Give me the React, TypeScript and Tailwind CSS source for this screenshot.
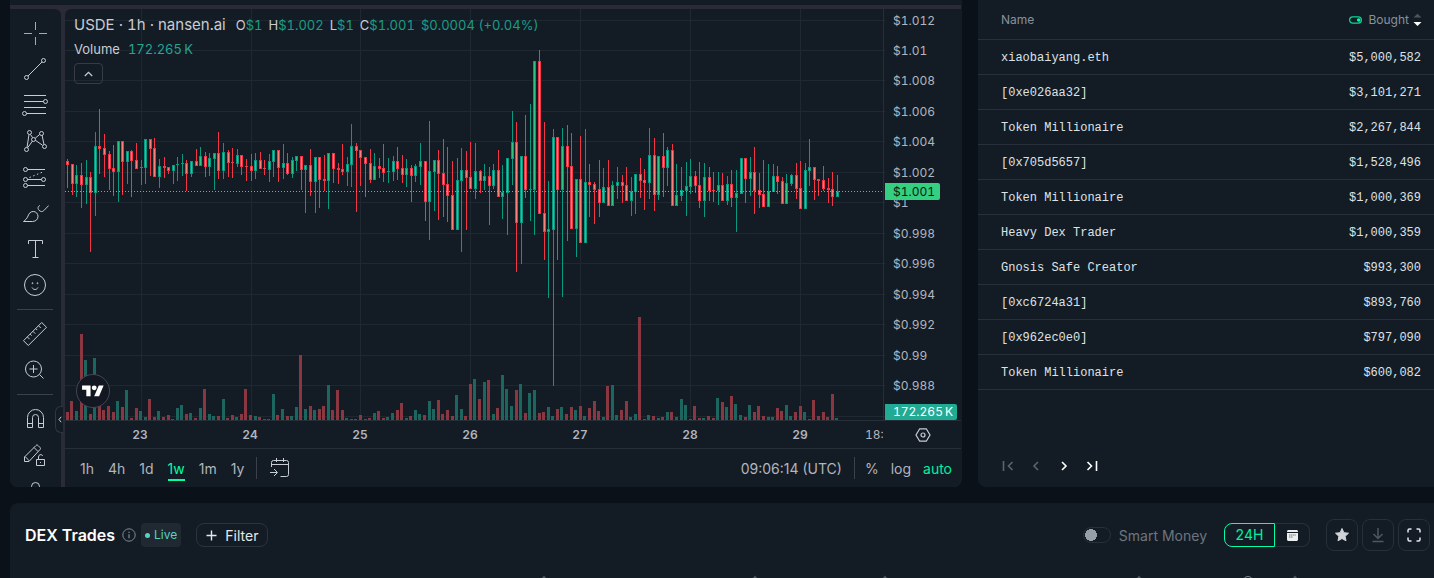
import React from "react";

type Candle = ["r" | "g", number, number, number, number, number];

// [direction, high, body top, body bottom, low, volume height]
const CANDLES: Candle[] = [
  ["r", 159, 161, 165, 188, 8], ["r", 164, 164, 184, 195, 19], ["g", 165, 175, 184, 197, 9], ["r", 163, 175, 185, 208, 86],
  ["g", 160, 177, 185, 204, 60], ["r", 172, 177, 193, 252, 6], ["g", 132, 146, 193, 216, 62], ["r", 109, 146, 149, 174, 14],
  ["r", 134, 148, 155, 177, 10], ["r", 151, 154, 169, 190, 14], ["r", 145, 168, 172, 196, 8], ["g", 141, 141, 172, 202, 19],
  ["r", 141, 141, 162, 195, 13], ["g", 151, 151, 162, 184, 30], ["r", 150, 151, 161, 197, 2], ["r", 143, 160, 169, 169, 12],
  ["g", 160, 167, 168, 185, 9], ["g", 139, 139, 168, 184, 3], ["r", 139, 139, 149, 176, 21], ["r", 138, 148, 177, 177, 3],
  ["g", 159, 166, 177, 188, 9], ["r", 157, 166, 168, 178, 3], ["r", 167, 167, 171, 174, 5], ["g", 165, 165, 171, 184, 1],
  ["g", 157, 164, 165, 181, 12], ["g", 154, 163, 164, 176, 15], ["r", 160, 163, 174, 191, 6], ["g", 161, 161, 174, 177, 7],
  ["r", 149, 161, 166, 166, 2], ["g", 147, 156, 166, 166, 12], ["r", 152, 156, 167, 177, 31], ["g", 153, 158, 167, 176, 6],
  ["g", 153, 153, 159, 190, 4], ["r", 132, 153, 171, 179, 4], ["g", 143, 152, 171, 179, 21], ["r", 150, 152, 163, 177, 2],
  ["r", 148, 162, 163, 178, 5], ["g", 149, 155, 164, 167, 3], ["r", 155, 155, 167, 175, 6], ["r", 159, 166, 167, 181, 31],
  ["r", 154, 166, 171, 181, 5], ["g", 153, 160, 171, 179, 4], ["r", 152, 160, 169, 169, 3], ["r", 160, 168, 169, 175, 1],
  ["g", 154, 161, 170, 182, 1], ["g", 150, 150, 162, 177, 26], ["r", 150, 150, 168, 182, 5], ["g", 144, 163, 168, 179, 11],
  ["r", 153, 163, 174, 175, 4], ["g", 157, 160, 174, 178, 4], ["g", 156, 156, 161, 171, 13], ["r", 156, 156, 170, 190, 65],
  ["g", 165, 165, 170, 213, 11], ["r", 149, 165, 182, 196, 14], ["g", 157, 157, 182, 213, 10], ["r", 157, 157, 180, 208, 11],
  ["r", 155, 179, 181, 191, 14], ["g", 153, 153, 181, 209, 35], ["r", 153, 153, 169, 183, 10], ["r", 163, 168, 170, 184, 30],
  ["r", 144, 169, 172, 175, 10], ["g", 157, 164, 172, 186, 2], ["g", 124, 146, 165, 187, 1], ["r", 143, 146, 151, 212, 1],
  ["r", 150, 150, 158, 186, 5], ["r", 157, 157, 164, 197, 1], ["r", 149, 163, 180, 183, 2], ["g", 153, 166, 180, 180, 7],
  ["r", 158, 166, 169, 178, 9], ["r", 144, 168, 173, 182, 2], ["g", 158, 171, 172, 183, 3], ["g", 156, 161, 172, 181, 7],
  ["r", 147, 161, 169, 180, 10], ["r", 155, 168, 175, 183, 17], ["g", 159, 168, 175, 187, 2], ["r", 165, 168, 176, 202, 4],
  ["g", 164, 166, 176, 182, 10], ["g", 143, 161, 167, 185, 6], ["r", 161, 161, 202, 221, 5], ["g", 121, 171, 202, 240, 19],
  ["g", 160, 160, 172, 211, 11], ["r", 150, 160, 174, 220, 20], ["r", 139, 173, 185, 217, 6], ["r", 147, 184, 196, 222, 10],
  ["r", 161, 195, 230, 230, 4], ["g", 158, 180, 230, 230, 25], ["g", 148, 170, 181, 252, 11], ["r", 151, 170, 178, 230, 4],
  ["r", 142, 177, 189, 189, 36], ["g", 143, 171, 189, 199, 41], ["r", 170, 171, 181, 193, 21], ["g", 164, 176, 181, 190, 38],
  ["r", 167, 176, 186, 225, 40], ["g", 164, 170, 186, 189, 6], ["r", 150, 170, 197, 197, 12], ["g", 165, 192, 197, 219, 45],
  ["g", 158, 158, 193, 235, 31], ["g", 111, 142, 159, 185, 14], ["r", 122, 142, 223, 272, 30], ["g", 156, 156, 223, 264, 36],
  ["r", 115, 156, 190, 198, 7], ["g", 104, 189, 190, 221, 27], ["g", 61, 61, 190, 235, 30], ["r", 50, 61, 214, 214, 7],
  ["r", 122, 213, 232, 260, 8], ["g", 181, 229, 232, 298, 13], ["g", 129, 137, 230, 386, 4], ["r", 137, 137, 190, 260, 11],
  ["g", 128, 146, 190, 297, 13], ["r", 125, 146, 167, 241, 6], ["r", 133, 166, 229, 229, 13], ["g", 179, 179, 229, 257, 10],
  ["r", 136, 179, 243, 243, 14], ["g", 129, 182, 243, 243, 4], ["r", 164, 182, 185, 217, 12], ["r", 182, 184, 190, 224, 19],
  ["r", 160, 189, 203, 217, 9], ["g", 168, 187, 203, 203, 3], ["r", 160, 187, 206, 206, 34], ["g", 181, 185, 206, 206, 35],
  ["g", 167, 182, 186, 199, 5], ["r", 175, 182, 186, 203, 10], ["r", 167, 185, 201, 201, 19], ["g", 177, 191, 201, 216, 3],
  ["g", 174, 174, 192, 214, 6], ["r", 158, 174, 181, 198, 103], ["r", 169, 180, 183, 210, 1], ["g", 128, 155, 183, 199, 5],
  ["r", 138, 155, 195, 211, 4], ["g", 156, 156, 195, 200, 2], ["r", 133, 156, 168, 197, 3], ["g", 147, 150, 168, 186, 8],
  ["r", 144, 150, 206, 206, 8], ["g", 164, 195, 206, 206, 3], ["g", 167, 190, 196, 201, 21], ["g", 162, 186, 191, 216, 15],
  ["g", 159, 176, 187, 194, 1], ["r", 171, 176, 186, 193, 14], ["r", 162, 185, 201, 208, 2], ["g", 163, 177, 201, 217, 2],
  ["r", 167, 177, 191, 201, 4], ["r", 172, 190, 191, 202, 2], ["g", 172, 185, 191, 205, 22], ["r", 173, 185, 201, 201, 18],
  ["g", 176, 184, 201, 205, 13], ["r", 170, 184, 198, 207, 24], ["g", 170, 193, 198, 232, 16], ["g", 158, 158, 194, 194, 5],
  ["r", 158, 158, 179, 203, 3], ["g", 157, 172, 179, 196, 15], ["r", 147, 172, 191, 214, 8], ["r", 173, 190, 195, 208, 14],
  ["r", 160, 194, 207, 207, 4], ["g", 164, 191, 207, 207, 3], ["g", 164, 176, 192, 192, 3], ["r", 166, 176, 182, 194, 12],
  ["r", 177, 181, 204, 204, 9], ["g", 174, 183, 204, 204, 15], ["g", 174, 175, 184, 186, 4], ["r", 163, 175, 189, 199, 8],
  ["r", 161, 188, 209, 209, 14], ["g", 163, 170, 209, 209, 8], ["g", 139, 167, 171, 186, 1], ["r", 167, 167, 180, 200, 20],
  ["r", 179, 179, 181, 196, 4], ["r", 166, 180, 189, 191, 8], ["r", 178, 188, 190, 203, 3], ["r", 172, 189, 197, 206, 26],
  ["g", 175, 191, 197, 197, 2],
];

const GRID_Y = [20, 50, 80, 111, 141, 172, 202, 233, 263, 294, 324, 355, 385, 416];
const PRICES = ["$1.012", "$1.01", "$1.008", "$1.006", "$1.004", "$1.002", "$1", "$0.998", "$0.996", "$0.994", "$0.992", "$0.99", "$0.988"];
const DAYS = ["23", "24", "25", "26", "27", "28", "29"];
const VOLUME = "172.265\u2009K";
const candleX = (i: number) => Math.floor(67.82 + i * 4.58);
const volumeX = (i: number) => Math.floor(67.3 + i * 4.58);

const ROWS: [string, string][] = [
  ["xiaobaiyang.eth", "$5,000,582"],
  ["[0xe026aa32]", "$3,101,271"],
  ["Token Millionaire", "$2,267,844"],
  ["[0x705d5657]", "$1,528,496"],
  ["Token Millionaire", "$1,000,369"],
  ["Heavy Dex Trader", "$1,000,359"],
  ["Gnosis Safe Creator", "$993,300"],
  ["[0xc6724a31]", "$893,760"],
  ["[0x962ec0e0]", "$797,090"],
  ["Token Millionaire", "$600,082"],
];

function CandleChart() {
  return (
    <svg viewBox="65 9 818 411" preserveAspectRatio="none" className="block h-[411px] w-full" shapeRendering="crispEdges" role="img" aria-label="USDE hourly price chart">
      {GRID_Y.map((y) => <rect key={y} x={65} y={y} width={818} height={1} fill="#1f2831" />)}
      {DAYS.map((d, i) => <rect key={d} x={candleX(16 + 24 * i)} y={9} width={1} height={411} fill="#1f2831" />)}
      {CANDLES.map((c, i) => (
        <rect key={i} x={volumeX(i) - 1} y={420 - c[5]} width={3} height={c[5]} fill={c[0] === "g" ? "#1d665f" : "#8a3741"} />
      ))}
      {CANDLES.map(([dir, high, top, bottom, low], i) => {
        const x = candleX(i);
        const edge = dir === "g" ? "#089981" : "#f23645";
        const body = dir === "g" ? "#2fc480" : "#fb8078";
        return (
          <g key={i}>
            <rect x={x} y={high} width={1} height={low - high} fill={edge} />
            <rect x={x - 1} y={top} width={3} height={bottom - top} fill={edge} />
            {bottom - top > 2 && <rect x={x} y={top + 1} width={1} height={bottom - top - 2} fill={body} />}
          </g>
        );
      })}
      <path d="M65 191.5H883" stroke="#36d287" strokeDasharray="1 2" />
    </svg>
  );
}

const TOOLS: { label: string; active?: boolean; art: React.ReactNode }[][] = [
  [
    { label: "Cross", active: true, art: <path d="M14.5 3v8M14.5 18v8M3 14.5h8M18 14.5h8" /> },
    { label: "Trend line", art: <><path d="M7 21 21 7" /><circle cx="22.5" cy="5.5" r="2" /><circle cx="5.5" cy="22.5" r="2" /></> },
    { label: "Fib retracement", art: <><path d="M3 4.5h22M3 10.5h19.5M3 16.5h22M5.5 22.5H25" /><circle cx="24.5" cy="10.5" r="2" /><circle cx="3.5" cy="22.5" r="2" /></> },
    { label: "Patterns", art: <><path d="M6 20.500 8 7.500M9.500 7.500l2 3M6.700 20.700l4.800-6.700M14.200 11.200l4.500-3.700M14.200 13.200l7.300 5M21 8l2 9.500" /><circle cx="8.500" cy="5.500" r="2" /><circle cx="20.500" cy="6.500" r="2" /><circle cx="12.500" cy="12.500" r="2" /><circle cx="5.500" cy="22.500" r="2" /><circle cx="23.500" cy="19.500" r="2" /></> },
    { label: "Prediction", art: <><path d="M6.500 6.500H24M6.500 16.500h14M6.500 22.500H24" /><path d="M8.500 14.500 23 8.500" strokeDasharray="1.500 2.500" /><circle cx="4.500" cy="6.500" r="2" /><circle cx="4.500" cy="16.500" r="2" /><circle cx="22.500" cy="16.500" r="2" /><circle cx="4.500" cy="22.500" r="2" /></> },
    { label: "Brush", art: <path d="M2.500 22.500h9c3 0 5.500-2 5.500-5.200 0-2.600-2-4.800-4.700-4.800-3 0-4.300 2-5.300 4.500-1 2.600-2.500 4-4.500 5.500zM19 6.500c-2 .5-2.700 3-1 4.700s3.300 1.800 4.700.5l5-5.200" /> },
    { label: "Text", art: <path d="M7.500 9V5.500h14V9M14.500 5.500v17M11.500 22.500h6" /> },
    { label: "Icons", art: <><circle cx="14" cy="14" r="10.500" /><path d="M11 16.500c.8 1.400 1.800 2 3 2s2.200-.6 3-2" /><circle cx="11.500" cy="12.200" r=".5" /><circle cx="16.500" cy="12.200" r=".5" /></> },
  ],
  [
    { label: "Measure", art: <path d="M20.700 2.500 2.500 20.700l4.800 4.800L25.500 7.300zM17.500 5.700l2.300 2.300M14.700 8.500l1.500 1.500M11.900 11.300l2.300 2.300M9.100 14.100l1.500 1.500M6.300 16.900l2.300 2.300" /> },
    { label: "Zoom in", art: <><circle cx="12.500" cy="13" r="8" /><path d="M12.500 9v8M8.500 13h8M18.500 18.500l4 4" /></> },
  ],
  [
    { label: "Magnet", art: <path d="M6.500 22.500V12.500a8 8 0 0 1 16 0v10h-5v-10a3 3 0 0 0-6 0v10zM6.500 18.500h5M17.500 18.500h5" /> },
    { label: "Lock drawing mode", art: <><path d="M3.500 20.500v-4.500L15 4.500c.7-.7 1.300-.7 2 0l2 2c.7.7.7 1.300 0 2L8 20.500zM4 15.500l4.500 4.500M13 6.500l4 4" /><path d="M15.500 18.500h8v6h-8zM17.500 18.500v-2.500c0-3 4-3 4-1M19.500 21v1" /></> },
    { label: "Lock all drawings", art: <path d="M10.500 13V9.500a4 4 0 0 1 8 0V13M7.500 13.500h14v9h-14z" /> },
  ],
];

function Toolbar() {
  return (
    <div className="h-[478px] w-[51px] shrink-0 overflow-hidden rounded-tr-md rounded-bl-lg bg-[#131c25] pt-1.5 pr-px">
      {TOOLS.map((group, g) => (
        <div key={g}>
          {g > 0 && <div className="mx-[7px] my-1.5 h-px bg-[#3b404c]" />}
          {group.map((tool) => (
            <button key={tool.label} aria-label={tool.label} className={`flex h-9 w-full items-center justify-center ${tool.active ? "text-[#00ffa7]" : "text-[#c9ccd4]"}`}>
              <svg width="28" height="28" viewBox="0 0 28 28" fill="none" stroke="currentColor" strokeWidth="1">{tool.art}</svg>
            </button>
          ))}
        </div>
      ))}
    </div>
  );
}

function Legend() {
  const ohlc: [string, string][] = [["O", "$1"], ["H", "$1.002"], ["L", "$1"], ["C", "$1.001"]];
  return (
    <div className="absolute top-1.5 left-[9px] text-[13px]">
      <div className="flex h-5 items-baseline">
        <h2 className="mr-2.5 text-[15px] leading-5 text-[#c9ccd4]">USDE · 1h · nansen.ai</h2>
        <div className="flex gap-1.5 text-[#1a9c87]">
          {ohlc.map(([k, v]) => <span key={k}><span className="text-[#c9ccd4]">{k}</span>{v}</span>)}
          <span>$0.0004 (+0.04%)</span>
        </div>
      </div>
      <div className="mt-[5px] flex h-5 items-center gap-2">
        <span className="text-[#c9ccd4]">Volume</span>
        <span className="text-[#22a592]">{VOLUME}</span>
      </div>
      <button aria-label="Hide indicator legend" className="mt-[3px] flex h-[21px] w-[29px] items-center justify-center rounded border border-[#363b47] text-[#c9ccd4]">
        <svg width="9" height="6" viewBox="0 0 9 6" fill="none" stroke="currentColor" strokeWidth="1.2"><path d="M.8 5 4.500 1.300 8.200 5" /></svg>
      </button>
    </div>
  );
}

function PriceAxis() {
  return (
    <div className="relative w-[78px] shrink-0 border-l border-[#262e38]">
      <svg className="block h-[411px] w-full" role="img" aria-label="Price scale">
        {GRID_Y.map((y) => <rect key={y} x={0} y={y - 9} width={1} height={1} fill="#262e38" />)}
        {PRICES.map((p, i) => <text key={p} x={9} y={GRID_Y[i] - 4} fontSize="12" fill="#b2b5be">{p}</text>)}
      </svg>
      <span className="absolute top-[174px] left-px h-[17px] w-[55px] rounded-r-xs bg-[#34cf80] pl-2 text-[12px] leading-[17px] text-[#0c1a17]">$1.001</span>
      <span className="absolute bottom-0 left-px h-4 w-[72px] rounded-r-xs bg-[#22ab94] pl-2 text-[12px] leading-4 text-white">{VOLUME}</span>
    </div>
  );
}

function ChartPanel() {
  return (
    <section className="rounded-b-lg bg-[#131c25] pt-[5px] pr-px tabular-nums">
      <div className="relative flex gap-1 rounded-b-lg bg-[#2a2b37] pt-1">
        <Toolbar />
        <button aria-label="Hide drawings toolbar" className="absolute bottom-[54px] left-[45px] flex h-[27px] w-2 items-center justify-center rounded-l-md border border-r-0 border-[#2f3541] bg-[#131c25] text-[#c9ccd4]">
          <svg width="4" height="7" viewBox="0 0 4 7" fill="none" stroke="currentColor"><path d="M3.200.8 1 3.500l2.200 2.700" /></svg>
        </button>
        <div className="min-w-0 flex-1 rounded-tl-md rounded-br-lg bg-[#131c25]">
          <div className="flex">
            <div className="relative min-w-0 flex-1">
              <CandleChart />
              <Legend />
              <div className="absolute bottom-3 left-[11px] flex size-[34px] items-center justify-center rounded-full border border-[#434651] bg-[#131722] text-white">
                <svg width="22" height="17" viewBox="0 0 36 28" fill="currentColor"><path d="M14 22H7V11H0V4h14v18zM28 22h-8l7.500-18h8L28 22z" /><circle cx="20" cy="8" r="4" /></svg>
              </div>
            </div>
            <PriceAxis />
          </div>
          <div className="flex h-7 border-t border-[#262e38] text-[12px] text-[#b2b5be]">
            <div className="grid min-w-0 flex-1 grid-cols-[repeat(7,minmax(0,110fr))_minmax(0,28fr)] items-center overflow-hidden pl-5">
              {DAYS.map((d) => <span key={d} className="text-center font-semibold">{d}</span>)}
              <span className="overflow-hidden pl-2.5 whitespace-nowrap">18:</span>
            </div>
            <div className="flex w-[78px] shrink-0 items-center justify-center pl-0.5">
              <button aria-label="Scale settings" className="text-[#c9ccd4]">
                <svg width="16" height="14" viewBox="0 0 16 14" fill="none" stroke="currentColor" strokeWidth="1.200"><path d="M4.700.8h6.600L15 7l-3.700 6.200H4.700L1 7z" /><circle cx="8" cy="7" r="2" /></svg>
              </button>
            </div>
          </div>
          <div className="flex h-[39px] items-center border-t border-[#262e38] pr-[9px] pl-[15px] text-[14px] text-[#b2b5be] [font-variant-numeric:normal]">
            <div className="flex gap-3.5">
              {["1h", "4h", "1d", "1w", "1m", "1y"].map((r) => (
                <button key={r} className={r === "1w" ? "relative text-[#00ffa7] after:absolute after:inset-x-0 after:-bottom-0.5 after:h-0.5 after:bg-[#00ffa7]" : ""}>{r}</button>
              ))}
            </div>
            <div className="ml-3 h-[22px] w-px bg-[#3b404c]" />
            <button aria-label="Go to date" className="ml-3 text-[#c9ccd4]">
              <svg width="21" height="20" viewBox="0 0 21 20" fill="none" stroke="currentColor"><path d="M2.500 9V4.500a2 2 0 0 1 2-2h13a2 2 0 0 1 2 2v12a2 2 0 0 1-2 2h-6M2.500 6.500h17M7.500 0v4M14.500 0v4M1 14.500h7M5 11l3.500 3.500L5 18" /></svg>
            </button>
            <button className="ml-auto">09:06:14 (UTC)</button>
            <div className="mr-2.5 ml-3 h-[22px] w-px bg-[#3b404c]" />
            <div className="flex gap-3">
              <button>%</button>
              <button>log</button>
              <button className="text-[#00f2a0]">auto</button>
            </div>
          </div>
        </div>
      </div>
    </section>
  );
}

const PAGES: [string, string, boolean][] = [
  ["First page", "M1.500 1v10M10.500 2 6.500 6l4 4", false],
  ["Previous page", "M8 2 4 6l4 4", false],
  ["Next page", "M4 2l4 4-4 4", true],
  ["Last page", "M1.500 2l4 4-4 4M10.500 1v10", true],
];

function BuyersPanel() {
  return (
    <section className="flex flex-col rounded-bl-lg bg-[#131c25]">
      <table className="w-full">
        <thead>
          <tr className="h-[39px] border-b border-[#27303a] text-[12px] text-[#88919b]">
            <th className="pt-0.5 pl-[23px] text-left font-normal">Name</th>
            <th className="pt-0.5 pr-3 font-normal">
              <button className="ml-auto flex items-center">
                <svg className="mr-1.5" width="13" height="8" viewBox="0 0 13 8" fill="none"><rect x=".6" y=".9" width="11.800" height="6.200" rx="3" stroke="#0bd694" strokeWidth="1.200" /><circle cx="9.700" cy="4" r="1.800" fill="#00ffa7" /></svg>
                Bought
                <svg className="ml-1" width="9" height="14" viewBox="0 0 9 14"><path d="M.5 4.500 4.500.8l4 3.700z" fill="#4d565f" /><path d="M.5 9 4.500 13l4-4z" fill="#fff" /></svg>
              </button>
            </th>
          </tr>
        </thead>
        <tbody className="font-['Liberation_Mono',monospace] text-[12px] text-[#dfe2e5]">
          {ROWS.map(([name, amount]) => (
            <tr key={amount} className="h-[35px] border-b border-[#27303a]">
              <td className="pt-[3px] pl-[23px]">{name}</td>
              <td className="pt-[3px] pr-[13px] text-right">{amount}</td>
            </tr>
          ))}
        </tbody>
      </table>
      <nav aria-label="Pages" className="mt-auto flex pb-[7px] pl-4">
        {PAGES.map(([label, d, on]) => (
          <button key={label} aria-label={label} disabled={!on} className={`flex size-7 items-center justify-center ${on ? "text-white" : "text-[#5b646d]"}`}>
            <svg width="12" height="12" viewBox="0 0 12 12" fill="none" stroke="currentColor" strokeWidth="1.600"><path d={d} /></svg>
          </button>
        ))}
      </nav>
    </section>
  );
}

function TradesPanel() {
  const square = "flex size-8 items-center justify-center rounded-lg border border-[#27303a]";
  return (
    <section className="flex-1 rounded-tl-lg bg-[#131c25]">
      <div className="flex h-16 items-center pr-1 pl-[15px]">
        <h2 className="text-[16px] font-semibold text-white">DEX Trades</h2>
        <svg className="ml-[7px] text-[#808993]" width="14" height="14" viewBox="0 0 14 14" fill="none" stroke="currentColor"><circle cx="7" cy="7" r="6.200" /><path d="M7 6.300v4M7 3.700v1.200" strokeWidth="1.200" /></svg>
        <span className="ml-[5px] flex h-6 items-center gap-1 rounded bg-[#202932] px-1 text-[12px] text-[#54d3c2]">
          <span className="size-[5px] rounded-full bg-[#54d3c2]" />Live
        </span>
        <button className="ml-[15px] flex h-6 items-center gap-2 rounded-lg border border-[#2b343e] px-[9px] text-[14px] text-[#e6e8ea]">
          <svg width="11" height="11" viewBox="0 0 11 11" stroke="currentColor" strokeWidth="1.400"><path d="M5.500.5v10M.5 5.500h10" /></svg>
          Filter
        </button>
        <label className="ml-auto flex items-center gap-2 text-[14px] text-[#6c757f]">
          <input type="checkbox" role="switch" className="h-4 w-7 appearance-none rounded-full border border-[#27303a] bg-[radial-gradient(circle_at_7px_7px,#969ea8_6px,transparent_6px)]" />
          Smart Money
        </label>
        <div className="ml-[17px] flex h-6">
          <button className="w-[51px] rounded-l-lg border border-[#00ffa7] text-[14px] leading-[22px] text-[#00f2a0]">24H</button>
          <button aria-label="Choose dates" className="flex w-[35px] items-center justify-center rounded-r-lg border border-l-0 border-[#27303a] text-[#eceef0]">
            <svg width="11" height="11" viewBox="0 0 11 11"><path d="M1.500 0h8C10.300 0 11 .7 11 1.500V2H0v-.5C0 .7.700 0 1.500 0zM0 3h11v6.500c0 .8-.7 1.500-1.500 1.500h-8C.7 11 0 10.300 0 9.500z" fill="currentColor" /><path d="M2 5h7M2 7h4" stroke="#737b84" strokeDasharray="1.400 .4" /></svg>
          </button>
        </div>
        <div className="ml-4 flex gap-1">
          <button aria-label="Favourite" className={`${square} text-[#d0d3d8]`}>
            <svg width="16" height="16" viewBox="0 0 16 16" fill="currentColor" stroke="currentColor" strokeLinejoin="round"><path d="m8 1.500 1.900 4.200 4.600.5-3.400 3.100.9 4.500L8 11.500l-4 2.300.9-4.500L1.500 6.200l4.600-.5z" /></svg>
          </button>
          <button aria-label="Download" className={`${square} text-[#4e5760]`}>
            <svg width="14" height="16" viewBox="0 0 14 16" fill="none" stroke="currentColor" strokeWidth="1.500"><path d="M7 1v10M2.500 7 7 11.500 11.500 7M1.500 14.500h11" /></svg>
          </button>
          <button aria-label="Full screen" className={`${square} text-[#e6e8ea]`}>
            <svg width="14" height="14" viewBox="0 0 14 14" fill="none" stroke="currentColor" strokeWidth="1.500"><path d="M1 4.500V2.500A1.500 1.500 0 0 1 2.500 1h2M9.500 1h2A1.500 1.500 0 0 1 13 2.500v2M13 9.500v2a1.500 1.500 0 0 1-1.500 1.500h-2M4.500 13h-2A1.500 1.500 0 0 1 1 11.500v-2" /></svg>
          </button>
        </div>
      </div>
      <div className="mt-2 grid grid-cols-[539fr_211fr_130fr_254fr_156fr_134fr]">
        {[0, 1, 2, 3, 4].map((c) => (
          <div key={c} className="flex items-start justify-end gap-[37px] pr-px">
            {c === 4 && <svg width="12" height="12" viewBox="0 0 12 12" fill="none" stroke="#808993"><circle cx="6" cy="6.500" r="5" /></svg>}
            <svg width="8" height="12" viewBox="0 0 8 12" fill="#4d565f"><path d="M.5 4.500 4 .5l3.500 4z" /></svg>
          </div>
        ))}
      </div>
    </section>
  );
}

export default function App() {
  return (
    <main className="flex h-screen flex-col gap-4 overflow-hidden bg-[#0a1118] pl-2.5 font-['Inter',sans-serif]">
      <div className="grid shrink-0 grid-cols-[952fr_456fr] gap-4">
        <ChartPanel />
        <BuyersPanel />
      </div>
      <TradesPanel />
    </main>
  );
}
